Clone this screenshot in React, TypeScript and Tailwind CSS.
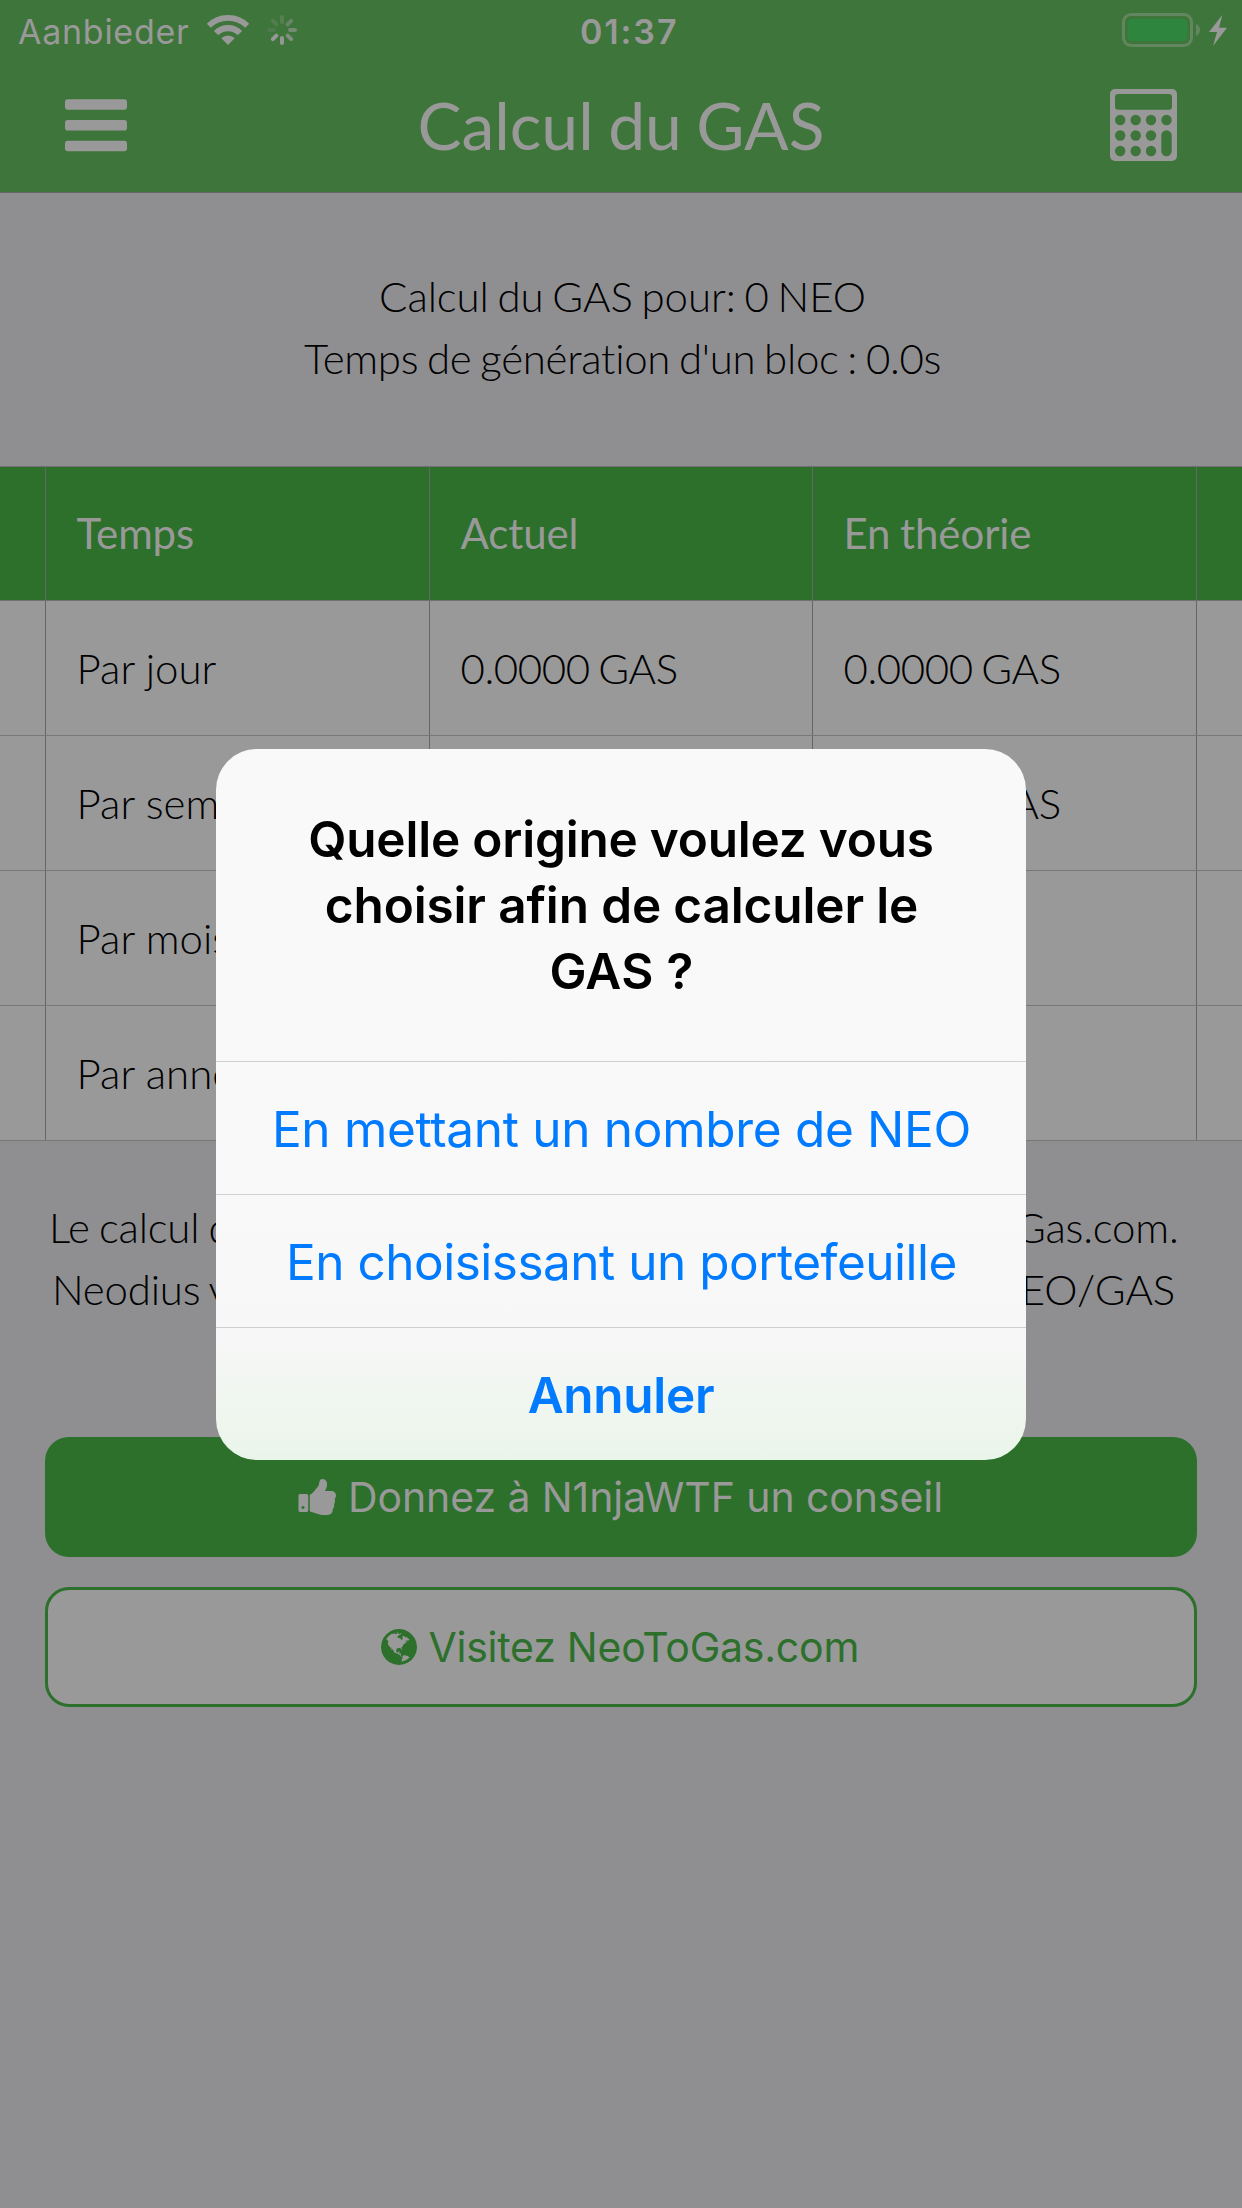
const THUMBS_UP =
  "M320 1344q0-26-19-45t-45-19q-27 0-45.5 19t-18.5 45q0 27 18.5 45.5t45.5 18.5q26 0 45-18.5t19-45.5zm160-512v640q0 26-19 45t-45 19h-288q-26 0-45-19t-19-45v-640q0-26 19-45t45-19h288q26 0 45 19t19 45zm1184 0q0 86-55 149 15 44 15 76 3 76-43 137 17 56 0 117-15 57-54 94 9 112-49 181-64 76-197 78h-129q-66 0-144-15.5t-121.5-29-120.5-39.5q-123-43-158-44-26-1-45-19.5t-19-44.5v-641q0-25 18-43.5t43-20.5q24-2 76-59t101-121q68-87 101-120 18-18 31-48t17.5-48.5 13.5-60.5q7-39 12.5-61t19.5-52 34-50q19-19 45-19 46 0 82.5 10.5t60 26 40 40.5 24 45 12 50 5 45 .5 39q0 38-9.5 76t-19 60-27.5 56q-3 6-10 18t-11 22-8 24h277q78 0 135 57t57 135z";

const GLOBE =
  "M896 128q209 0 385.5 103t279.5 279.5 103 385.5-103 385.5-279.5 279.5-385.5 103-385.5-103-279.5-279.5-103-385.5 103-385.5 279.5-279.5 385.5-103zm274 521q-2 1-9.5 9.5t-13.5 9.5q2 0 4.5-5t5-11 3.5-7q6-7 22-15 14-6 52-12 34-8 51 11-2-2 9.5-13t14.5-12q3-2 15-4.5t15-7.5l2-22q-12 1-17.5-7t-6.5-21q0 2-6 8 0-7-4.5-8t-11.5 1-9 1q-10-3-15-7.5t-8-16.5-4-15q-2-5-9.5-11t-9.5-10q-1-2-2.5-5.5t-3-6.5-4-5.5-5.5-2.5-7 5-7.5 10-4.5 5q-3-2-6-1.5t-4.5 1-4.5 3-5 3.5q-3 2-8.5 3t-8.5 2q15-5-1-11-10-4-16-3 9-4 7.5-12t-8.5-14h5q-1-4-8.5-8.5t-17.5-8.5-13-6q-8-5-34-9.5t-33-.5q-5 6-4.5 10.5t4 14 3.5 12.5q1 6-5.5 13t-6.5 12q0 7 14 15.5t10 21.5q-3 8-16 16t-16 12q-5 8-1.5 18.5t10.5 16.5q2 2 1.5 4t-3.5 4.5-5.5 4-6.5 3.5l-3 2q-11 5-20.5-6t-13.5-26q-7-25-16-30-23-8-29 1-5-13-41-26-25-9-58-4 6-1 0-15-7-15-19-12 3-6 4-17.5t1-13.5q3-13 12-23 1-1 7-8.5t9.5-13.5.5-6q35 4 50-11 5-5 11.5-17t10.5-17q9-6 14-5.5t14.5 5.5 14.5 5q14 1 15.5-11t-7.5-20q12 1 3-17-4-7-8-9-12-4-27 5-8 4 2 8-1-1-9.5 10.5t-16.5 17.5-16-5q-1-1-5.5-13.5t-9.5-13.5q-8 0-16 15 3-8-11-15t-24-8q19-12-8-27-7-4-20.5-5t-19.5 4q-5 7-5.5 11.5t5 8 10.5 5.5 11.5 4 8.5 3q14 10 8 14-2 1-8.5 3.5t-11.5 4.5-6 4q-3 4 0 14t-2 14q-5-5-9-17.5t-7-16.5q7 9-25 6l-10-1q-4 0-16 2t-20.5 1-13.5-8q-4-8 0-20 1-4 4-2-4-3-11-9.5t-10-8.5q-46 15-94 41 6 1 12-1 5-2 13-6.5t10-5.5q34-14 42-7l5-5q14 16 20 25-7-4-30-1-20 6-22 12 7 12 5 18-4-3-11.5-10t-14.5-11-15-5q-16 0-22 1-146 80-235 222 7 7 12 8 4 1 5 9t2.5 11 11.5-3q9 8 3 19 1-1 44 27 19 17 21 21 3 11-10 18-1-2-9-9t-9-4q-3 5 .5 18.5t10.5 12.5q-7 0-9.5 16t-2.5 35.5-1 23.5l2 1q-3 12 5.5 34.5t21.5 19.5q-13 3 20 43 6 8 8 9 3 2 12 7.5t15 10 10 10.5q4 5 10 22.5t14 23.5q-2 6 9.5 20t10.5 23q-1 0-2.5 1t-2.5 1q3 7 15.5 14t15.5 13q1 3 2 10t3 11 8 2q2-20-24-62-15-25-17-29-3-5-5.5-15.5t-4.5-14.5q2 0 6 1.5t8.5 3.5 7.5 4 2 3q-3 7 2 17.5t12 18.5 17 19 12 13q6 6 14 19.5t0 13.5q9 0 20 10t17 20q5 8 8 26t5 24q2 7 8.5 13.5t12.5 9.5l16 8 13 7q5 2 18.5 10.5t21.5 11.5q10 4 16 4t14.5-2.5 13.5-3.5q15-2 29 15t21 21q36 19 55 11-2 1 .5 7.5t8 15.5 9 14.5 5.5 8.5q5 6 18 15t18 15q6-4 7-9-3 8 7 20t18 10q14-3 14-32-31 15-49-18 0-1-2.5-5.5t-4-8.5-2.5-8.5 0-7.5 5-3q9 0 10-3.5t-2-12.5-4-13q-1-8-11-20t-12-15q-5 9-16 8t-16-9q0 1-1.5 5.5t-1.5 6.5q-13 0-15-1 1-3 2.5-17.5t3.5-22.5q1-4 5.5-12t7.5-14.5 4-12.5-4.5-9.5-17.5-2.5q-19 1-26 20-1 3-3 10.5t-5 11.5-9 7q-7 3-24 2t-24-5q-13-8-22.5-29t-9.5-37q0-10 2.5-26.5t3-25-5.5-24.5q3-2 9-9.5t10-10.5q2-1 4.5-1.5t4.5 0 4-1.5 3-6q-1-1-4-3-3-3-4-3 7 3 28.5-1.5t27.5 1.5q15 11 22-2 0-1-2.5-9.5t-.5-13.5q5 27 29 9 3 3 15.5 5t17.5 5q3 2 7 5.5t5.5 4.5 5-.5 8.5-6.5q10 14 12 24 11 40 19 44 7 3 11 2t4.5-9.5 0-14-1.5-12.5l-1-8v-18l-1-8q-15-3-18.5-12t1.5-18.5 15-18.5q1-1 8-3.5t15.5-6.5 12.5-8q21-19 15-35 7 0 11-9-1 0-5-3t-7.5-5-4.5-2q9-5 2-16 5-3 7.5-11t7.5-10q9 12 21 2 7-8 1-16 5-7 20.5-10.5t18.5-9.5q7 2 8-2t1-12 3-12q4-5 15-9t13-5l17-11q3-4 0-4 18 2 31-11 10-11-6-20 3-6-3-9.5t-15-5.5q3-1 11.5-.5t10.5-1.5q15-10-7-16-17-5-43 12zm-163 877q206-36 351-189-3-3-12.5-4.5t-12.5-3.5q-18-7-24-8 1-7-2.5-13t-8-9-12.5-8-11-7q-2-2-7-6t-7-5.5-7.5-4.5-8.5-2-10 1l-3 1q-3 1-5.5 2.5t-5.5 3-4 3 0 2.5q-21-17-36-22-5-1-11-5.5t-10.5-7-10-1.5-11.5 7q-5 5-6 15t-2 13q-7-5 0-17.5t2-18.5q-3-6-10.5-4.5t-12 4.5-11.5 8.5-9 6.5-8.5 5.5-8.5 7.5q-3 4-6 12t-5 11q-2-4-11.5-6.5t-9.5-5.5q2 10 4 35t5 38q7 31-12 48-27 25-29 40-4 22 12 26 0 7-8 20.5t-7 21.5q0 6 2 16z";

function Glyph({ d }: { d: string }) {
  return (
    <svg className="size-[42px] shrink-0" viewBox="0 0 1792 1792" fill="currentColor">
      <path d={d} />
    </svg>
  );
}

function Wifi() {
  return (
    <svg className="h-[30px] w-[42px]" viewBox="0 0 42 30" fill="none" stroke="currentColor">
      <path d="M1.8 10.8a27.15 27.15 0 0 1 38.4 0" strokeWidth="5.7" />
      <path d="M9.1 18.1a16.8 16.8 0 0 1 23.8 0" strokeWidth="6.2" />
      <path d="M14.3 23.3a9.5 9.5 0 0 1 13.4 0L21 30z" fill="currentColor" stroke="none" />
    </svg>
  );
}

const SPOKES = [0.28, 0.45, 0.6, 0.72, 0.95, 0.98, 0.18, 0.22];

function Spinner() {
  return (
    <svg className="size-[30px]" viewBox="0 0 30 30" fill="none" stroke="currentColor">
      {SPOKES.map((opacity, i) => (
        <path
          key={i}
          d="M15 2v5"
          strokeWidth="4"
          strokeLinecap="round"
          opacity={opacity}
          transform={`rotate(${i * 45} 15 15)`}
        />
      ))}
    </svg>
  );
}

function Battery() {
  return (
    <svg className="h-[34px] w-[105px]" viewBox="0 0 105 34">
      <rect x="1.5" y="1.5" width="68" height="31" rx="7.5" fill="none" stroke="#62875f" strokeWidth="3" />
      <rect x="5.7" y="6" width="59.6" height="22" rx="4" fill="#2e863e" />
      <path d="M74 11q4 1.800 4 6t-4 6z" fill="#62875f" />
      <path d="M100.300 2 87 19h8l-4 14 14-18.300h-8z" fill="#999" />
    </svg>
  );
}

function Menu() {
  return (
    <svg className="h-[53px] w-[62px]" viewBox="0 0 62 53" fill="currentColor">
      <rect y="0.200" width="62" height="10.600" rx="2.800" />
      <rect y="21" width="62" height="10.600" rx="2.800" />
      <rect y="41.700" width="62" height="10.600" rx="2.800" />
    </svg>
  );
}

function Calculator() {
  return (
    <svg className="h-[72px] w-[67px]" viewBox="0 0 67 72">
      <rect width="67" height="72" rx="5" fill="#999" />
      <g fill="#3e753a">
        <rect x="5" y="5" width="57" height="15.800" rx="3" />
        {[31, 46.5, 62].map((cy) =>
          [10.2, 25.7, 41, 56.5].map((cx) =>
            cx === 56.5 && cy > 31 ? null : <circle key={`${cx}-${cy}`} cx={cx} cy={cy} r="5.200" />,
          ),
        )}
        <rect x="51.300" y="41.300" width="10.400" height="25.900" rx="5.200" />
      </g>
    </svg>
  );
}

const ROWS = [
  ["Par jour", "0.0000 GAS", "0.0000 GAS"],
  ["Par semaine", "", "0.0000 GAS"],
  ["Par mois", "", ""],
  ["Par année", "", ""],
];

function HeadRow({ cells }: { cells: string[] }) {
  return (
    <div className="grid h-[134px] grid-cols-[45px_384px_383px_384px_46px] border-b border-[#706f73] bg-[#2c702c] tracking-[-0.100px] text-[#999] [word-spacing:-1px]">
      <div />
      {cells.map((c) => (
        <div key={c} className="flex items-center border-l border-[#666] pb-px pl-[30.500px]">
          {c}
        </div>
      ))}
      <div className="border-l border-[#666]" />
    </div>
  );
}

function Row({ cells }: { cells: string[] }) {
  return (
    <div className="grid h-[135px] grid-cols-[45px_384px_383px_384px_46px] border-b border-[#777] bg-[#999] font-light">
      <div />
      <div className="flex items-center border-l border-[#666] pl-[30.500px]">{cells[0]}</div>
      {cells.slice(1).map((c, i) => (
        <div
          key={i}
          className="flex items-center border-l border-[#666] pl-[30.500px] tracking-[-0.400px] [word-spacing:-2.500px]"
        >
          {c}
        </div>
      ))}
      <div className="border-l border-[#666]" />
    </div>
  );
}

export default function App() {
  return (
    <div className="relative flex h-[2208px] w-[1242px] flex-col overflow-hidden bg-[#8f8f92] font-['Lato',sans-serif] text-[42px] leading-[62px] text-black">
      <header className="h-[193px] border-b border-[#666] bg-[#3e753a] text-[#999]">
        <div className="flex h-[60px] items-center font-['Inter',sans-serif] text-[34px]">
          <div className="flex w-[580px] items-center pl-[18px]">
            <span className="w-[189px] pt-[3px] tracking-[0.730px]">Aanbieder</span>
            <Wifi />
            <div className="pl-[18px]">
              <Spinner />
            </div>
          </div>
          <span className="pt-[3px] font-semibold tracking-[1.900px]">01:37</span>
          <div className="ml-auto pr-[15px]">
            <Battery />
          </div>
        </div>
        <div className="grid h-[130px] grid-cols-[132px_1fr_132px] items-center">
          <button className="pl-[65px]">
            <Menu />
          </button>
          <h1 className="text-center text-[66px] leading-[80px] [word-spacing:-2.500px]">Calcul du GAS</h1>
          <button>
            <Calculator />
          </button>
        </div>
      </header>

      <section className="h-[273px] pt-[72px] pl-[3px] text-center font-light">
        <p className="tracking-[-0.100px] [word-spacing:-2.500px]">Calcul du GAS pour: 0 NEO</p>
        <p className="tracking-[-0.300px] [word-spacing:-2.300px]">Temps de génération d'un bloc : 0.0s</p>
      </section>

      <section className="border-t border-[#706f73]">
        <HeadRow cells={["Temps", "Actuel", "En théorie"]} />
        {ROWS.map((r) => (
          <Row key={r[0]} cells={r} />
        ))}
      </section>

      <section className="h-[296px] pt-[55px] font-light tracking-[-0.200px] [word-spacing:-2px]">
        <p className="flex justify-between pr-[63.500px] pl-[49px]">
          <span>Le calcul du GAS</span>
          <span>NeoToGas.com.</span>
        </p>
        <p className="flex justify-between pr-[67px] pl-[52px]">
          <span>Neodius vous</span>
          <span>NEO/GAS</span>
        </p>
      </section>

      <section className="flex flex-col gap-[30px] px-[45px] font-['Inter',sans-serif] text-[41px]">
        <button className="flex h-[120px] items-center justify-center gap-[9px] rounded-[24px] bg-[#2c702c] pr-[2px] tracking-[-0.090px] text-[#999]">
          <Glyph d={THUMBS_UP} />
          Donnez à N1njaWTF un conseil
        </button>
        <button className="flex h-[120px] items-center justify-center gap-[8.500px] rounded-[24px] border-[3px] border-[#2c702c] bg-[#999] pr-[5px] tracking-[-0.230px] text-[#2c702c]">
          <Glyph d={GLOBE} />
          Visitez NeoToGas.com
        </button>
      </section>

      <div className="absolute inset-x-0 top-[749px] mx-auto h-[711px] w-[810px] overflow-hidden rounded-[41px] bg-linear-to-b from-[#f9f9f9] from-60% via-[#f6f7f6] via-84% to-[#eaf5ea] text-center font-['Inter',sans-serif] text-[49.500px] leading-[66px]">
        <h2 className="h-[312px] pt-[57px] font-semibold">
          <span className="block tracking-[-0.200px]">Quelle origine voulez vous</span>
          <span className="block pl-px tracking-[-0.140px]">choisir afin de calculer le</span>
          <span className="block pl-px tracking-[0.300px]">GAS ?</span>
        </h2>
        <button className="block h-[133px] w-full border-t border-[#d0d0d4] pt-[2px] pl-px tracking-[-0.300px] text-[#007aff]">
          En mettant un nombre de NEO
        </button>
        <button className="block h-[133px] w-full border-t border-[#d0d0d4] pt-[2px] pl-px tracking-[-0.500px] text-[#007aff]">
          En choisissant un portefeuille
        </button>
        <button className="block h-[133px] w-full border-t border-[#cdd0cf] pt-[2px] font-semibold tracking-[-0.300px] text-[#007aff]">
          Annuler
        </button>
      </div>
    </div>
  );
}
